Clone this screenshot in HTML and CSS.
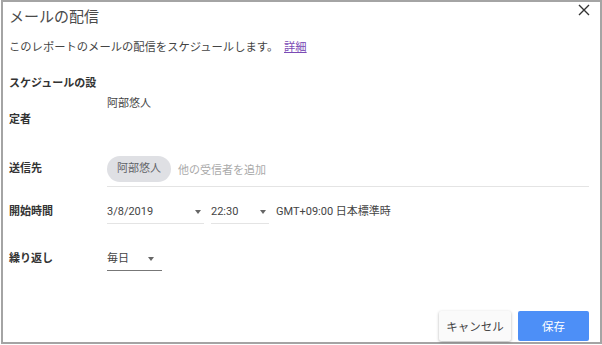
FILE: index.html
```html
<!DOCTYPE html>
<html lang="ja">
<head>
    <meta charset="UTF-8">
    <title>メールの配信</title>
    <link rel="stylesheet" href="styles.css">
</head>
<body>

    <div class="dialog">
        <button class="close" aria-label="閉じる">
            <svg width="12" height="12" viewBox="0 0 12 12"><path d="M1 1L11 11M11 1L1 11" stroke="#333" stroke-width="1.4" fill="none"/></svg>
        </button>

        <h1 class="title">メールの配信</h1>
        <p class="desc">このレポートのメールの配信をスケジュールします。 <a href="#" class="link">詳細</a></p>

        <div class="row row-owner">
            <div class="label">スケジュールの設定者</div>
            <div class="value">阿部悠人</div>
        </div>

        <div class="row row-to">
            <div class="label">送信先</div>
            <div class="recipients">
                <span class="chip">阿部悠人</span>
                <span class="placeholder">他の受信者を追加</span>
            </div>
        </div>

        <div class="row row-start">
            <div class="label">開始時間</div>
            <div class="select date">3/8/2019<span class="arrow"></span></div>
            <div class="select time">22:30<span class="arrow"></span></div>
            <div class="tz">GMT+09:00 日本標準時</div>
        </div>

        <div class="row row-repeat">
            <div class="label">繰り返し</div>
            <div class="select repeat">毎日<span class="arrow"></span></div>
        </div>

        <div class="footer">
            <button class="btn btn-cancel">キャンセル</button>
            <button class="btn btn-save">保存</button>
        </div>
    </div>

</body>
</html>
```

FILE: styles.css
```css
* { margin: 0; padding: 0; box-sizing: border-box; }
body {
    font-family: Roboto, "Noto Sans CJK JP", sans-serif;
    font-size: 11px; color: #444; background: #fff;
}
.dialog {
    position: relative;
    margin-left: 1px; width: 601px; height: 344px;
    border: 2px solid #a4a4a4;
    padding: 0 11px 0 6px;
    display: flex; flex-direction: column;
}
.close {
    position: absolute; top: 1px; right: 9px;
    width: 14px; height: 14px; border: none; background: none;
    display: flex; align-items: center; justify-content: center; cursor: pointer;
}
.title { font-size: 15px; font-weight: 400; line-height: 20px; margin-top: 5px; color: #4a4a4a; }
.desc { line-height: 18px; margin-top: 12px; font-size: 11.3px; }
.link { color: #7b4bb5; margin-left: 3px; }

.row { display: flex; align-items: flex-start; }
.label { width: 98px; flex-shrink: 0; font-weight: 700; color: #333; }

.row-owner { margin-top: 9px; height: 72px; align-items: center; }
.row-owner .label { line-height: 36px; align-self: flex-start; }

.row-to { margin-top: 18px; }
.row-to .label { line-height: 26px; }
.recipients {
    flex: 1; display: flex; align-items: center; gap: 7px;
    padding-bottom: 4px; border-bottom: 1px solid #e4e4e4;
}
.chip {
    background: #dfe0e4; color: #5f6368; border-radius: 13px;
    height: 26px; line-height: 26px; padding: 0 10px;
}
.placeholder { color: #aaa; }

.row-start { margin-top: 15px; }
.row-start .label, .row-repeat .label { line-height: 20px; }
.select {
    position: relative; line-height: 20px; padding-bottom: 1px;
    border-bottom: 1px solid #e4e4e4;
}
.arrow {
    position: absolute; top: 8px; right: 3px;
    border-left: 3.5px solid transparent; border-right: 3.5px solid transparent;
    border-top: 4px solid #666;
}
.date { width: 97px; }
.time { width: 58px; margin-left: 7px; }
.tz { line-height: 20px; margin-left: 7px; }

.row-repeat { margin-top: 25px; }
.repeat { width: 55px; border-bottom-color: #777; }
.repeat .arrow { right: 8px; }

.footer {
    margin-top: auto; padding-bottom: 1px;
    display: flex; justify-content: flex-end; gap: 7px;
}
.btn {
    font-family: inherit; font-size: 11.5px; height: 30px; border: none; border-radius: 2px;
    cursor: pointer;
}
.btn-cancel { width: 72px; background: #fafafa; color: #444; box-shadow: 0 1px 3px rgba(0, 0, 0, 0.3); }
.btn-save { width: 71px; background: #4d8ff7; color: #fff; }
```
